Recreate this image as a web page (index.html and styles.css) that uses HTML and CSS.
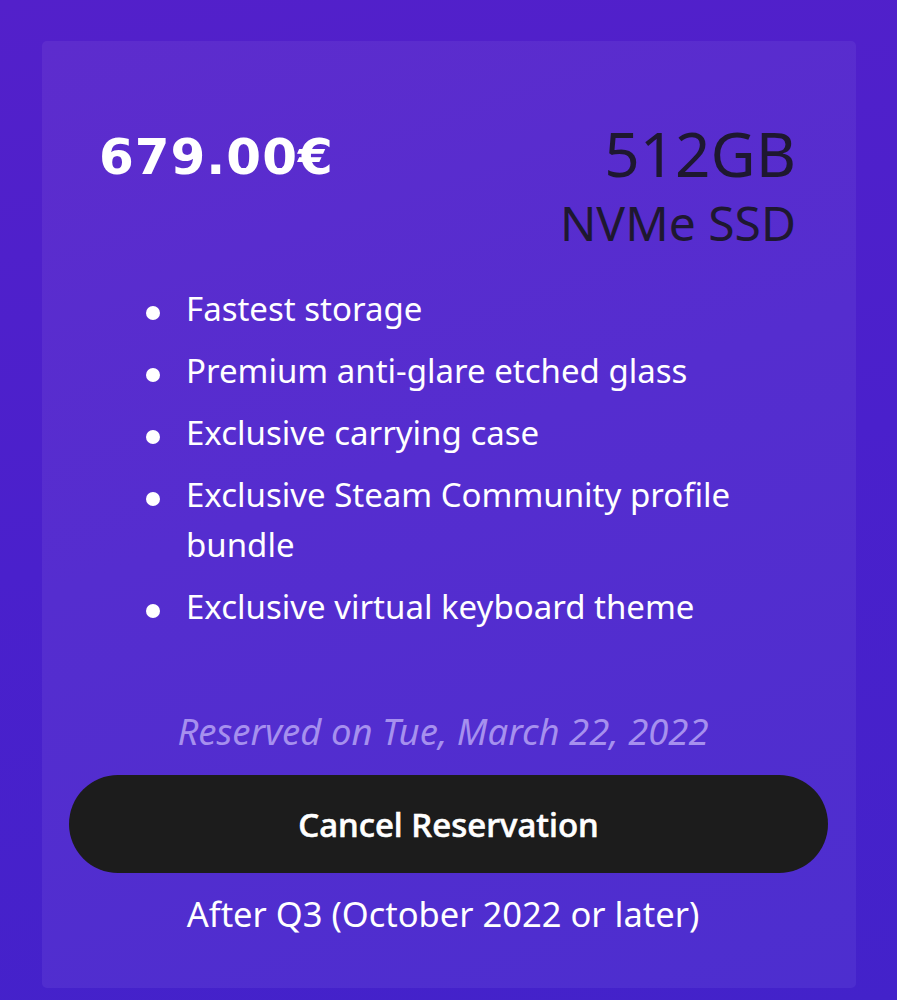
FILE: index.html
```html
<!DOCTYPE html>
<html lang="en">
<head>
<meta charset="utf-8">
<title>Reservation</title>
<link rel="stylesheet" href="styles.css">
</head>
<body>
<div class="page">
  <div class="card">
    <div class="top">
      <div class="price">679.00€</div>
      <div class="spec">
        <div class="size">512GB</div>
        <div class="kind">NVMe SSD</div>
      </div>
    </div>
    <ul class="features">
      <li>Fastest storage</li>
      <li>Premium anti-glare etched glass</li>
      <li>Exclusive carrying case</li>
      <li>Exclusive Steam Community profile bundle</li>
      <li>Exclusive virtual keyboard theme</li>
    </ul>
    <div class="reserved">Reserved on Tue, March 22, 2022</div>
    <button class="cancel">Cancel Reservation</button>
    <div class="ship">After Q3 (October 2022 or later)</div>
  </div>
</div>
</body>
</html>
```
FILE: styles.css
```css
html, body {
  margin: 0;
  padding: 0;
}
body {
  width: 897px;
  height: 1000px;
  overflow: hidden;
  background: linear-gradient(170deg, #5320ca 0%, #4a20cc 50%, #4322ca 100%);
  font-family: "Noto Sans", "Open Sans", sans-serif;
  color: #fff;
}
.page {
  padding: 41px 41px 0 42px;
}
.card {
  width: 814px;
  height: 947px;
  box-sizing: border-box;
  border-radius: 5px;
  background: linear-gradient(160deg, #5d2ccd 0%, #552dcf 45%, #4d2ecf 100%);
  padding: 76px 60px 0 58px;
  display: flex;
  flex-direction: column;
}
.top {
  display: flex;
  justify-content: space-between;
  align-items: flex-start;
}
.price {
  margin-top: 4px;
  margin-left: -1px;
  font-family: "DejaVu Sans", sans-serif;
  font-weight: 700;
  font-size: 50px;
  letter-spacing: 1px;
  line-height: 72px;
  color: #fff;
}
.spec {
  text-align: right;
  color: #1e1830;
}
.size {
  font-size: 62px;
  line-height: 72px;
}
.kind {
  margin-top: 6px;
  font-size: 48px;
  line-height: 56px;
}
.features {
  list-style: none;
  margin: 33px 0 0 0;
  padding: 0 0 0 86px;
  font-size: 33px;
  line-height: 50px;
}
.features li {
  position: relative;
  margin-bottom: 12px;
}
.features li:last-child {
  margin-bottom: 0;
}
.features li::before {
  content: "";
  position: absolute;
  left: -40px;
  top: 22px;
  width: 14px;
  height: 14px;
  border-radius: 50%;
  background: #fff;
}
.reserved {
  margin-top: 74px;
  padding-right: 10px;
  text-align: center;
  font-style: italic;
  font-size: 36.5px;
  line-height: 50px;
  color: #a690ee;
}
.cancel {
  margin: 19px 0 0 -31px;
  width: 759px;
  height: 98px;
  flex: none;
  border: none;
  border-radius: 49px;
  background: #1c1c1c;
  color: #fff;
  font-family: "Noto Sans", "Open Sans", sans-serif;
  font-weight: 500;
  font-size: 33px;
  -webkit-text-stroke: 0.6px #fff;
  cursor: pointer;
}
.ship {
  margin-top: 16px;
  padding-right: 10px;
  text-align: center;
  font-size: 34.5px;
  line-height: 50px;
}
```
